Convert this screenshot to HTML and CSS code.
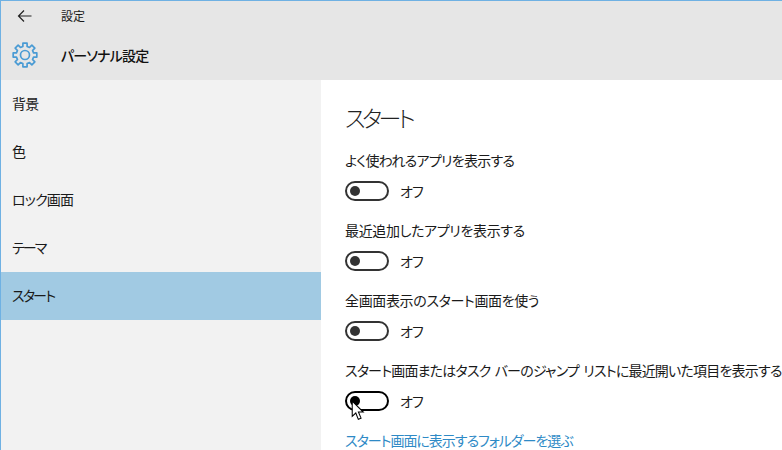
FILE: index.html
```html
<!DOCTYPE html>
<html lang="ja">
  <head>
    <meta charset="UTF-8" />
    <title>設定</title>
    <link rel="stylesheet" href="styles.css">
  </head>
  <body>
    <div class="window">
      <div class="header">
        <div class="titlebar">
          <svg class="back" width="16" height="16" viewBox="0 0 16 16">
            <path d="M7 2.5 L1.5 8 L7 13.5 M1.5 8 H14.5" fill="none" stroke="#222" stroke-width="1.2" />
          </svg>
          <span class="app-name">設定</span>
        </div>
        <div class="page-head">
          <svg class="gear" width="26" height="26" viewBox="0 0 26 26">
            <path d="M10.87 4.46 L10.92 1.18 H15.08 L15.13 4.46 L17.53 5.46 L19.88 3.17 L22.83 6.12 L20.54 8.47 L21.54 10.87 L24.82 10.92 V15.08 L21.54 15.13 L20.54 17.53 L22.83 19.88 L19.88 22.83 L17.53 20.54 L15.13 21.54 L15.08 24.82 H10.92 L10.87 21.54 L8.47 20.54 L6.12 22.83 L3.17 19.88 L5.46 17.53 L4.46 15.13 L1.18 15.08 V10.92 L4.46 10.87 L5.46 8.47 L3.17 6.12 L6.12 3.17 L8.47 5.46 Z" fill="none" stroke="#4a9bd4" stroke-width="1.7" stroke-linejoin="round" />
            <circle cx="13" cy="13" r="4.5" fill="none" stroke="#4a9bd4" stroke-width="1.7" />
          </svg>
          <span class="page-name">パーソナル設定</span>
        </div>
      </div>
      <div class="main">
        <ul class="nav">
          <li>背景</li>
          <li>色</li>
          <li>ロック画面</li>
          <li class="kana">テーマ</li>
          <li class="kana active">スタート</li>
        </ul>
        <div class="content">
          <h1>スタート</h1>
          <div class="setting">
            <div class="label">よく使われるアプリを表示する</div>
            <div class="row"><span class="toggle"></span><span>オフ</span></div>
          </div>
          <div class="setting">
            <div class="label wide">最近追加したアプリを表示する</div>
            <div class="row"><span class="toggle"></span><span>オフ</span></div>
          </div>
          <div class="setting">
            <div class="label wide">全画面表示のスタート画面を使う</div>
            <div class="row"><span class="toggle"></span><span>オフ</span></div>
          </div>
          <div class="setting">
            <div class="label long">スタート画面またはタスク バーのジャンプ リストに最近開いた項目を表示する</div>
            <div class="row">
              <span class="toggle hover">
                <svg class="cursor" width="14" height="21" viewBox="0 0 13 20">
                  <path d="M1 1 V15.5 L4.4 12.4 L6.8 18.4 L9.4 17.3 L6.9 11.5 H11.5 Z" fill="#fff" stroke="#000" stroke-width="1" />
                </svg>
              </span>
              <span>オフ</span>
            </div>
          </div>
          <a class="link" href="#">スタート画面に表示するフォルダーを選ぶ</a>
        </div>
      </div>
    </div>
  </body>
</html>
```

FILE: styles.css
```css
html,
body {
  margin: 0;
  height: 100%;
  overflow: hidden;
}
body {
  font-family: "Noto Sans CJK JP", "Noto Sans", sans-serif;
  font-size: 14px;
  font-feature-settings: "palt";
  color: #1a1a1a;
  background: #fff;
}

.window {
  height: 449px;
  border-top: 1px solid #6fb1e3;
  border-left: 1px solid #6fb1e3;
  display: flex;
  flex-direction: column;
}

.header {
  height: 79px;
  background: #e6e6e6;
  flex-shrink: 0;
}
.titlebar {
  height: 29px;
  display: flex;
  align-items: center;
  padding-left: 16px;
  font-size: 12px;
}
.app-name {
  margin-left: 28px;
}
.page-head {
  height: 50px;
  display: flex;
  align-items: center;
  padding-left: 11px;
}
.page-name {
  margin-left: 23px;
  font-size: 14px;
  font-weight: 500;
  letter-spacing: -0.8px;
  color: #111;
}

.main {
  flex: 1;
  display: flex;
  min-height: 0;
}
.nav {
  width: 320px;
  margin: 0;
  padding: 0;
  list-style: none;
  background: #f2f2f2;
  flex-shrink: 0;
}
.nav li {
  height: 48px;
  line-height: 47px;
  padding-left: 11px;
  letter-spacing: -0.8px;
}
.nav li.kana {
  letter-spacing: -1.8px;
}
.nav li.active {
  background: #a1cae3;
}

.content {
  flex: 1;
  padding-left: 24px;
  min-width: 0;
  white-space: nowrap;
  letter-spacing: -0.72px;
}
.content h1 {
  margin: 20px 0 0;
  height: 34px;
  line-height: 34px;
  font-size: 23px;
  font-weight: 300;
  letter-spacing: -3.5px;
  color: #222;
}
.setting {
  height: 70px;
}
.setting:first-of-type {
  margin-top: 16px;
}
.label {
  height: 20px;
  line-height: 20px;
}
.label.wide {
  letter-spacing: -0.35px;
}
.label.long {
  letter-spacing: -0.8px;
  word-spacing: 2px;
}
.row {
  margin-top: 9px;
  display: flex;
  align-items: center;
  gap: 11px;
  height: 24px;
}
.toggle {
  position: relative;
  box-sizing: border-box;
  width: 44px;
  height: 20px;
  border: 2px solid #333;
  border-radius: 10px;
  flex-shrink: 0;
}
.toggle::before {
  content: "";
  position: absolute;
  left: 3px;
  top: 3px;
  width: 10px;
  height: 10px;
  border-radius: 50%;
  background: #333;
}
.toggle.hover {
  border-color: #000;
}
.toggle.hover::before {
  background: #000;
}
.cursor {
  position: absolute;
  left: 4px;
  top: 7px;
}
.link {
  display: block;
  line-height: 20px;
  color: #2e8ac6;
  text-decoration: none;
  letter-spacing: -1px;
}
```
